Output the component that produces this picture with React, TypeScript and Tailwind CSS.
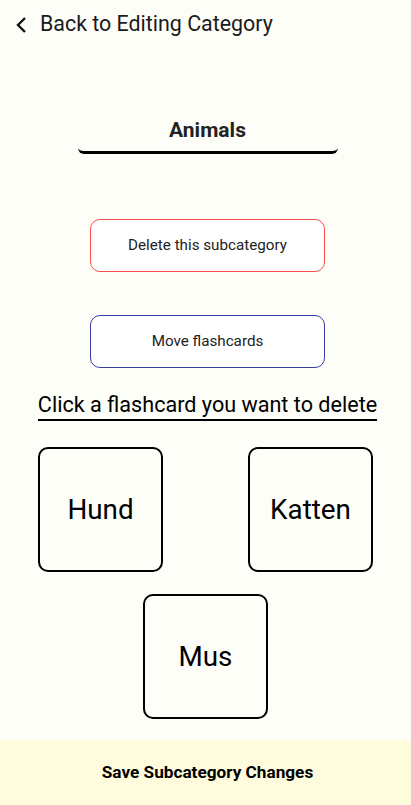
import React from 'react';

const cards = ['Hund', 'Katten', 'Mus'];

function FlashCard({ label }: { label: string }) {
    return (
        <div className="flex items-center justify-center w-[125px] h-[125px] rounded-[10px] border-2 border-black text-[27.8px] text-black">
            {label}
        </div>
    );
}

export default function App() {
    return (
        <div className="flex flex-col w-[411px] h-[805px] bg-[#fdfef8] font-['Roboto',sans-serif] text-[#1a1a1a]">
            <div className="flex items-center h-[48px] pl-[14px] pt-[1px]">
                <svg width="16" height="18" viewBox="0 0 16 18" className="mr-[10px]">
                    <path d="M11 2 L4 9 L11 16" fill="none" stroke="#111" strokeWidth="2.4" />
                </svg>
                <span className="text-[21.4px]">Back to Editing Category</span>
            </div>

            <div className="flex flex-col items-center mt-[63px] pl-[4px]">
                <div className="w-[260px] h-[43px] flex items-center justify-center border-b-[3px] border-black rounded-b-[6px] text-[21px] font-bold text-[#222]">
                    Animals
                </div>
            </div>

            <div className="flex flex-col items-center mt-[65px] gap-[43px] pl-[4px]">
                <button className="w-[235px] h-[53px] bg-white border border-[#ff4d4d] rounded-[10px] text-[15.2px] text-[#222]">
                    Delete this subcategory
                </button>
                <button className="w-[235px] h-[53px] bg-white border border-[#3b3ba8] rounded-[10px] text-[15.2px] text-[#222]">
                    Move flashcards
                </button>
            </div>

            <div className="flex justify-center mt-[24px] pl-[4px]">
                <span className="text-[21.6px] text-black border-b-2 border-black leading-[26px] pb-[1px]">
                    Click a flashcard you want to delete
                </span>
            </div>

            <div className="flex flex-wrap justify-between gap-y-[22px] px-[38px] mt-[26px]">
                <FlashCard label={cards[0]} />
                <FlashCard label={cards[1]} />
                <div className="w-full flex justify-center">
                    <FlashCard label={cards[2]} />
                </div>
            </div>

            <div className="mt-auto h-[65px] flex items-center justify-center pl-[4px] bg-[#fffcdd] text-[17.2px] font-bold text-black">
                Save Subcategory Changes
            </div>
        </div>
    );
}
